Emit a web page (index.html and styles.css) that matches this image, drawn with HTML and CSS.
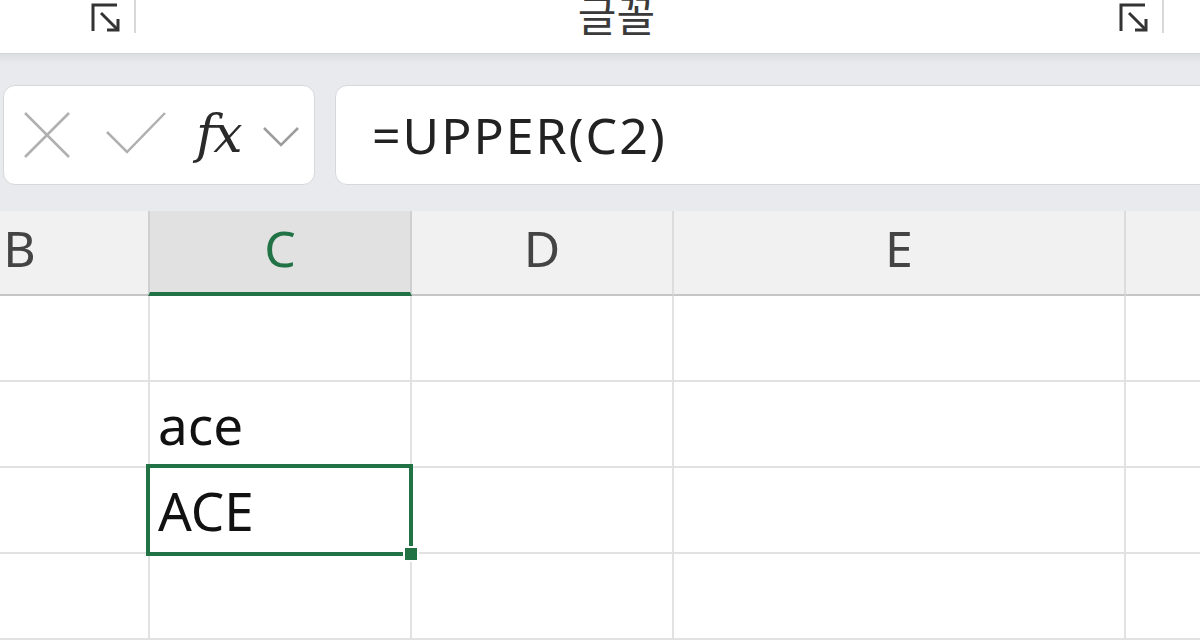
FILE: index.html
```html
<!DOCTYPE html>
<html lang="ko">
<head>
  <meta charset="UTF-8" />
  <title>UPPER 함수</title>
  <link rel="stylesheet" href="styles.css">
</head>
<body>
  <!-- ribbon (bottom edge only) -->
  <header class="ribbon">
    <div class="launcher-group first">
      <svg class="launcher" width="32" height="32" viewBox="0 0 32 32">
        <path d="M2 29V3H26" />
        <path d="M10 11L26 27" />
        <path d="M27 17V28H16" />
      </svg>
      <span class="divider"></span>
    </div>
    <div class="group-title">글꼴</div>
    <div class="launcher-group last">
      <svg class="launcher" width="32" height="32" viewBox="0 0 32 32">
        <path d="M2 29V3H26" />
        <path d="M10 11L26 27" />
        <path d="M27 17V28H16" />
      </svg>
      <span class="divider"></span>
    </div>
  </header>

  <!-- formula bar -->
  <section class="formula-bar">
    <div class="fx-box">
      <svg class="icon-cancel" width="46" height="46" viewBox="0 0 46 46">
        <path d="M1 1L45 45M45 1L1 45" />
      </svg>
      <svg class="icon-enter" width="60" height="42" viewBox="0 0 60 42">
        <polyline points="1,20 21,40 59,1" />
      </svg>
      <span class="fx">fx</span>
      <svg class="icon-chevron" width="36" height="20" viewBox="0 0 36 20">
        <polyline points="1,1 18,18 35,1" />
      </svg>
    </div>
    <div class="formula-input">=UPPER(C2)</div>
  </section>

  <!-- sheet -->
  <main class="sheet">
    <div class="sheet-row head">
      <div class="col-head">B</div>
      <div class="col-head active">C</div>
      <div class="col-head">D</div>
      <div class="col-head">E</div>
      <div class="col-head"></div>
    </div>
    <div class="sheet-row">
      <div class="cell"></div><div class="cell"></div><div class="cell"></div><div class="cell"></div><div class="cell"></div>
    </div>
    <div class="sheet-row">
      <div class="cell"></div><div class="cell">ace</div><div class="cell"></div><div class="cell"></div><div class="cell"></div>
    </div>
    <div class="sheet-row">
      <div class="cell"></div>
      <div class="cell selected">ACE
        <span class="sel-box"></span>
        <span class="fill-handle"></span>
      </div>
      <div class="cell"></div><div class="cell"></div><div class="cell"></div>
    </div>
    <div class="sheet-row">
      <div class="cell"></div><div class="cell"></div><div class="cell"></div><div class="cell"></div><div class="cell"></div>
    </div>
  </main>
</body>
</html>
```

FILE: styles.css
```css
/* Global */
body {
  margin: 0;
  width: 1200px;
  height: 642px;
  overflow: hidden;
  background: #fff;
  font-family: "Noto Sans", "Open Sans", "Noto Sans CJK KR", sans-serif;
  color: #222;
}

/* Ribbon */
.ribbon {
  height: 54px;
  box-sizing: border-box;
  display: flex;
  align-items: flex-start;
  background: #fff;
  border-bottom: 1px solid #d2d4d7;
}

.launcher-group {
  display: flex;
  align-items: flex-start;
}

.launcher-group.first {
  margin-left: 91px;
}

.launcher-group.last {
  margin-right: 36px;
}

.launcher {
  margin-top: 2px;
  fill: none;
  stroke: #333;
  stroke-width: 3;
}

.divider {
  width: 2px;
  height: 33px;
  margin-left: 11px;
  background: #d8d8d8;
}

.group-title {
  flex: 1;
  padding-right: 22px;
  margin-top: -7px;
  text-align: center;
  font-family: "Noto Sans CJK KR", sans-serif;
  font-size: 42px;
  line-height: 42px;
  color: #3a3a3a;
}

/* Formula bar */
.formula-bar {
  height: 157px;
  box-sizing: border-box;
  display: flex;
  align-items: flex-start;
  padding-top: 31px;
  background: linear-gradient(#dcdee1, #e8eaed 10px);
}

.fx-box {
  margin-left: 3px;
  width: 312px;
  height: 100px;
  box-sizing: border-box;
  display: flex;
  align-items: center;
  background: #fff;
  border: 1px solid #d6d8db;
  border-radius: 12px;
}

.fx-box svg {
  fill: none;
  stroke-width: 2.5;
}

.icon-cancel {
  margin-left: 20px;
  stroke: #b0b0b0;
}

.icon-enter {
  margin-left: 36px;
  margin-top: -4px;
  stroke: #b0b0b0;
}

.fx {
  margin-left: 30px;
  margin-top: -2px;
  font-family: "DejaVu Serif", serif;
  font-style: italic;
  font-size: 52px;
  line-height: 62px;
  letter-spacing: -2px;
  color: #2a2a2a;
}

.icon-chevron {
  margin-left: 22px;
  margin-top: 4px;
  stroke: #9c9c9c;
}

.formula-input {
  flex: 1;
  margin-left: 20px;
  margin-right: -20px;
  height: 100px;
  box-sizing: border-box;
  display: flex;
  align-items: center;
  padding-left: 36px;
  background: #fff;
  border: 1px solid #d6d8db;
  border-radius: 12px;
  font-size: 50px;
  line-height: 60px;
  letter-spacing: 2px;
  color: #222;
}

/* Sheet */
.sheet {
  margin-left: -109px;
}

.sheet-row {
  display: grid;
  grid-template-columns: 259px 262px 262px 452px 300px;
}

.col-head {
  height: 85px;
  box-sizing: border-box;
  padding-top: 7px;
  text-align: center;
  font-size: 50px;
  line-height: 60px;
  color: #444;
  background: #f1f1f1;
  border-right: 2px solid #dcdcdc;
  border-bottom: 2px solid #c6c6c6;
}

.col-head.active {
  background: #e1e1e1;
  color: #217346;
  border-left: 2px solid #d0d0d0;
  border-right-color: #d0d0d0;
  border-bottom: 4px solid #217346;
  margin-left: -2px;
}

.cell {
  height: 86px;
  box-sizing: border-box;
  display: flex;
  align-items: flex-end;
  padding: 0 0 11px 8px;
  font-size: 53px;
  line-height: 60px;
  color: #111;
  border-right: 2px solid #e2e2e2;
  border-bottom: 2px solid #e2e2e2;
}

.cell.selected {
  position: relative;
}

.sel-box {
  position: absolute;
  left: -4px;
  top: -4px;
  right: -3px;
  bottom: -4px;
  border: 4px solid #217346;
}

.fill-handle {
  position: absolute;
  left: 253px;
  top: 78px;
  width: 12px;
  height: 12px;
  background: #217346;
  border: 2px solid #fff;
}
```
